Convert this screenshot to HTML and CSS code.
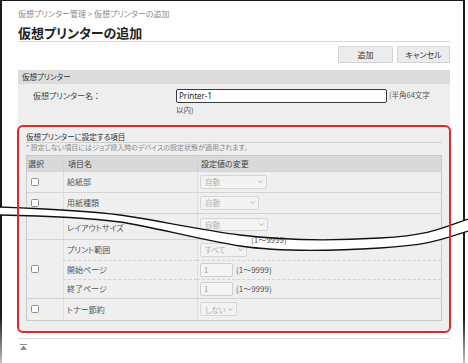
FILE: index.html
```html
<!DOCTYPE html>
<html lang="ja">
<head>
<meta charset="utf-8">
<title>仮想プリンターの追加</title>
<link rel="stylesheet" href="styles.css">
</head>
<body>
<div class="frame">
  <div class="crumbs">仮想プリンター管理 &gt; 仮想プリンターの追加</div>
  <h1 class="title">仮想プリンターの追加</h1>
  <div class="toolbar">
    <button class="btn btn-add">追加</button>
    <button class="btn btn-cancel">キャンセル</button>
  </div>
  <div class="panel">
    <div class="panel-head">仮想プリンター</div>
    <div class="name-row">
      <div class="name-label">仮想プリンター名 ：</div>
      <div class="name-field"><input class="text-input" type="text" value="Printer-1">(半角64文字<br>以内)</div>
    </div>
    <div class="items">
      <div class="items-title">仮想プリンターに設定する項目</div>
      <div class="items-note">* 設定しない項目にはジョブ投入時のデバイスの設定状態が適用されます。</div>
      <div class="grid">
        <div class="hd c1">選択</div>
        <div class="hd c2">項目名</div>
        <div class="hd c3">設定値の変更</div>

        <div class="cell c1"><input class="cb" type="checkbox"></div>
        <div class="cell c2">給紙部</div>
        <div class="cell c3"><span class="sel sel-67">自動<svg class="chev" width="5" height="3" viewBox="0 0 5 3"><polyline points="0.5,0.5 2.5,2.5 4.5,0.5"/></svg></span></div>

        <div class="cell c1"><input class="cb" type="checkbox"></div>
        <div class="cell c2">用紙種類</div>
        <div class="cell c3"><span class="sel sel-59">自動<svg class="chev" width="5" height="3" viewBox="0 0 5 3"><polyline points="0.5,0.5 2.5,2.5 4.5,0.5"/></svg></span></div>

        <div class="cell c1"></div>
        <div class="cell c2 low">レイアウトサイズ</div>
        <div class="cell c3 high"><span class="sel sel-68">自動<svg class="chev" width="5" height="3" viewBox="0 0 5 3"><polyline points="0.5,0.5 2.5,2.5 4.5,0.5"/></svg></span></div>

        <div class="cell c1 span3"><input class="cb" type="checkbox"></div>
        <div class="cell c2">プリント範囲</div>
        <div class="cell c3"><span class="sel sel-47">すべて<svg class="chev" width="5" height="3" viewBox="0 0 5 3"><polyline points="0.5,0.5 2.5,2.5 4.5,0.5"/></svg></span></div>

        <div class="cell c2 sub">開始ページ</div>
        <div class="cell c3 sub"><span class="num">1</span>(1～9999)</div>

        <div class="cell c2 sub">終了ページ</div>
        <div class="cell c3 sub"><span class="num">1</span>(1～9999)</div>

        <div class="cell c1"><input class="cb" type="checkbox"></div>
        <div class="cell c2">トナー節約</div>
        <div class="cell c3"><span class="sel sel-37">しない<svg class="chev" width="5" height="3" viewBox="0 0 5 3"><polyline points="0.5,0.5 2.5,2.5 4.5,0.5"/></svg></span></div>
      </div>
    </div>
  </div>
  <div class="page-foot">
    <svg class="to-top" width="7" height="6" viewBox="0 0 7 6"><rect x="0" y="0" width="7" height="1"/><polygon points="3.5,1.5 7,6 0,6"/></svg>
  </div>
</div>
<svg class="tear" width="468" height="363" viewBox="0 0 468 363">
  <path class="tear-band" d="M0,207 C50,209 90,211 120,215 S200,230 240,235 S330,241 380,238 S440,229 468,219 L468,231 C440,240 430,245 380,248 C330,251 280,252 240,246 C200,240 150,226 120,222 C90,218 50,216 0,215 Z"/>
  <text class="tear-text" x="251" y="243">(1～9999)</text>
  <path class="tear-line" d="M0,207 C50,209 90,211 120,215 S200,230 240,235 S330,241 380,238 S440,229 468,219"/>
  <path class="tear-line" d="M0,215 C50,216 90,218 120,222 S200,240 240,246 S330,251 380,248 S440,240 468,231"/>
</svg>
</body>
</html>
```
FILE: styles.css
```css
* { box-sizing: border-box; }
html, body { margin: 0; padding: 0; background: #fff; }
body {
  position: relative;
  width: 468px;
  height: 363px;
  overflow: hidden;
  font-family: "Noto Sans CJK JP", "Noto Sans", sans-serif;
  font-feature-settings: "palt" 1;
  color: #333;
}
.frame {
  width: 465px;
  height: 363px;
  border-style: solid;
  border-width: 1px 2px 0 2px;
  border-image: linear-gradient(to bottom, #1a1a1a 0%, #1a1a1a 87%, #c4c4c4 100%) 1;
  padding: 8px 13px 0 16px;
}
.crumbs { font-size: 8px; line-height: 10px; color: #8a8a8a; }
.title {
  margin: 6px 0 0;
  font-size: 13px;
  line-height: 16px;
  font-weight: bold;
  color: #222;
  border-bottom: 1px solid #d5d5d5;
}
.toolbar { display: flex; justify-content: flex-end; gap: 4px; margin-top: 4px; }
.btn {
  height: 17px;
  padding: 0;
  font-family: inherit;
  font-feature-settings: "palt" 1;
  font-size: 8px;
  color: #333;
  background: #ececec;
  border: 1px solid #d3d3d3;
  border-radius: 1px;
}
.btn-add { width: 55px; }
.btn-cancel { width: 53px; }

.panel { margin-top: 7px; background: #eeeeee; }
.panel-head {
  height: 14px;
  line-height: 14px;
  padding-left: 4px;
  background: #dcdcdc;
  font-size: 7.5px;
  color: #333;
}
.name-row { display: grid; grid-template-columns: 143px 1fr; padding: 4px 0 9px 15px; }
.name-label { font-size: 8px; line-height: 15px; color: #444; }
.name-field { font-size: 7.5px; line-height: 14px; color: #555; }
.text-input {
  width: 211px;
  height: 14px;
  margin: 0 2px 0 0;
  padding: 0 2px;
  vertical-align: middle;
  border: 1px solid #3a3a3a;
  border-radius: 2px;
  background: #fff;
  color: #222;
  font: 8px "Noto Sans", sans-serif;
}

.items { position: relative; padding: 5px 8px 11px; }
.items::after {
  content: "";
  position: absolute;
  top: -1px; left: -1px; right: -1px; bottom: -1px;
  border: 2px solid #ee2222;
  border-radius: 6px;
  z-index: 2;
  pointer-events: none;
}
.items-title { font-size: 7.5px; line-height: 11px; color: #333; border-bottom: 1px solid #cfcfcf; }
.items-note { font-size: 7px; line-height: 9px; color: #8a8a8a; }

.grid {
  margin-top: 3px;
  display: grid;
  grid-template-columns: 36px 134px 244px;
  grid-template-rows: 15px 21px 21px 26px 21px 19px 19px 22px;
  border: 1px solid #cacaca;
  background: #efefef;
  font-size: 8px;
  color: #555;
}
.hd { display: flex; align-items: center; background: #d9d9d9; color: #444; }
.cell { display: flex; align-items: center; border-top: 1px solid #d4d4d4; }
.c2, .c3 { border-left: 1px dotted #cdcdcd; }
.hd.c1 { padding-left: 1px; }
.hd.c2 { padding-left: 4px; }
.hd.c3 { padding-left: 3px; }
.cell.c1 { padding-left: 4px; }
.cell.c2 { padding-left: 3px; }
.cell.c3 { padding-left: 2px; }
.cell.sub { border-top: 1px dashed #d4d4d4; }
.cell.high { align-items: flex-start; padding-top: 4px; }
.cell.low { padding-top: 3px; }
.span3 { grid-row: span 3; }

.cb {
  appearance: none;
  -webkit-appearance: none;
  width: 8px;
  height: 8px;
  margin: 0;
  border: 1px solid #8f8f8f;
  border-radius: 1.5px;
  background: #fff;
}
.sel {
  display: inline-flex;
  align-items: center;
  justify-content: space-between;
  height: 14px;
  padding: 0 3px 0 4px;
  border: 1px solid #d6d6d6;
  border-radius: 2px;
  background: #f3f3f3;
  color: #b0b0b0;
  font-size: 7.5px;
}
.sel-67 { width: 67px; }
.sel-59 { width: 59px; }
.sel-68 { width: 68px; height: 13px; }
.sel-47 { width: 47px; }
.sel-37 { width: 37px; }
.chev polyline { fill: none; stroke: #a8a8a8; stroke-width: 0.9; }
.num {
  display: inline-flex;
  align-items: center;
  width: 33px;
  height: 14px;
  margin-right: 3px;
  padding-left: 3px;
  border: 1px solid #cfcfcf;
  border-radius: 2px;
  background: #f4f4f4;
  color: #999;
  font-size: 7.5px;
}

.page-foot { margin-top: 6px; border-top: 1px solid #dedede; padding: 4px 0 0 2px; line-height: 0; }
.to-top { fill: #8c8c8c; }

.tear { position: absolute; left: 0; top: 0; z-index: 1; pointer-events: none; }
.tear-band { fill: #fff; stroke: none; }
.tear-line { fill: none; stroke: #111; stroke-width: 1.3; }
.tear-text { font-size: 8px; fill: #555; font-family: "Noto Sans CJK JP", sans-serif; }
```
